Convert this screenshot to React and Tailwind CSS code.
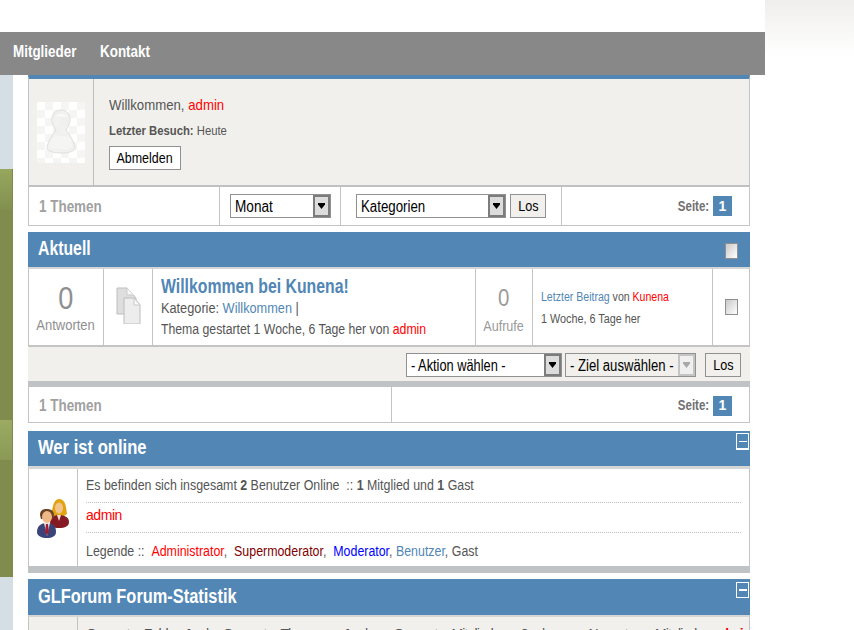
const font = "font-['Liberation_Sans',Arial,sans-serif]";

// the screenshot's text is rendered narrow, so squeeze it sideways
function Narrow({ scale, children }) {
  return <span className={`inline-block origin-left whitespace-nowrap ${scale}`}>{children}</span>;
}

function Arrow({ disabled }) {
  return (
    <span className={`flex h-full w-[17px] shrink-0 items-center justify-center border-2 ${disabled ? "border-[#c4c4c4] bg-[#efefef]" : "border-[#7c7c7c] bg-[#dcdcdc]"}`}>
      <svg width="9" height="6" viewBox="0 0 9 6">
        <path d="M1 0h7v1.5L4.5 6 1 1.5z" fill={disabled ? "#a8a8a8" : "#000"} />
      </svg>
    </span>
  );
}

function Select({ label, width, disabled, scale }) {
  return (
    <div className={`flex h-6 items-center justify-between border border-[#919191] ${disabled ? "bg-[#f1f0ec]" : "bg-white"} ${width}`}>
      <span className="min-w-0 flex-1 overflow-hidden pl-1 pt-px text-[16px] leading-none text-black">
        <Narrow scale={scale}>{label}</Narrow>
      </span>
      <Arrow disabled={disabled} />
    </div>
  );
}

function LosButton() {
  return (
    <button className="flex h-6 w-9 items-center justify-center border border-[#919191] bg-[#f1f0ec] pt-px text-[14px] text-black">
      <span className="inline-block scale-x-[0.9]">Los</span>
    </button>
  );
}

function Checkbox() {
  return <span className="block h-4 w-[13px] border border-[#8f8f8f] bg-gradient-to-br from-[#c9c9c9] to-white" />;
}

function Pager() {
  return (
    <div className="flex items-center gap-1">
      <span className="inline-block origin-right scale-x-[0.82] text-[14px] font-bold text-[#6f6f6f]">Seite:</span>
      <span className="flex h-5 w-[19px] items-center justify-center bg-[#5186b5] text-[14px] font-bold text-white">1</span>
    </div>
  );
}

function SectionHeader({ title, box, height, scale, pad }) {
  return (
    <div className={`flex items-start justify-between bg-[#5186b5] pl-[10px] ${height}`}>
      <h2 className={`text-[20px] font-bold leading-[24px] text-white ${pad}`}>
        <Narrow scale={scale}>{title}</Narrow>
      </h2>
      {box === "check" && (
        <span className="mr-[12px] mt-[11px]"><Checkbox /></span>
      )}
      {box === "thin" && (
        <span className="mr-[1px] mt-[2px] flex h-[17px] w-[13px] items-center justify-center border border-b-2 border-white">
          <span className="h-px w-2 bg-white" />
        </span>
      )}
      {box === "thick" && (
        <span className="mr-[1px] mt-[3px] flex h-4 w-[13px] items-center justify-center border border-white">
          <span className="h-0.5 w-2 bg-white" />
        </span>
      )}
    </div>
  );
}

function Avatar() {
  return (
    <div className="h-[61px] w-12 bg-[repeating-conic-gradient(#f5f5f4_0_25%,#ffffff_0_50%)] bg-[length:16px_16px]">
      <svg width="48" height="61" viewBox="0 0 48 61">
        <path d="M24 8c6 0 9 4 9 10 0 4-2 7-4 10 4 5 8 12 9 17 1 4-6 6-14 6s-15-2-14-6c1-5 5-12 9-17-2-3-4-6-4-10 0-6 3-10 9-10z" fill="#eeeeee" fillOpacity="0.75" stroke="#e0e0e0" />
        <path d="M18 15c2-4 10-4 12 0-3-1-9-1-12 0z" fill="#fafafa" />
        <path d="M15 36c4-3 14-3 18 0l3 9c-5 3-19 3-24 0z" fill="#f6f6f6" fillOpacity="0.7" />
      </svg>
    </div>
  );
}

function DocsIcon() {
  return (
    <svg width="25" height="37" viewBox="0 0 25 37">
      <path d="M1 1h10l9 10v16H1z" fill="#dedede" stroke="#bdbdbd" />
      <path d="M8 11h10l6 7v19H8z" fill="#ededed" stroke="#bdbdbd" />
      <path d="M18 11v7h6z" fill="#fafafa" stroke="#c9c9c9" />
      <path d="M11 1v7h6" fill="#fafafa" stroke="#c9c9c9" />
    </svg>
  );
}

function UsersIcon() {
  return (
    <svg width="33" height="40" viewBox="0 0 33 40">
      <path d="M22 0c4 0 6 3 7 8l1 7-3 2H17l-3-2 2-8c1-4 3-7 6-7z" fill="#e0a411" />
      <ellipse cx="22" cy="9" rx="4" ry="5.5" fill="#f2c38d" />
      <path d="M13 23c0-5 4-7 9-7s10 2 10 7c0 4-4 6-10 6s-9-2-9-6z" fill="#851a24" />
      <path d="M20 16h4l-2 6z" fill="#f4e3d2" />
      <path d="M3 16c0-5 3-6 7-6s7 2 7 6l-1 4H4z" fill="#6a4326" />
      <ellipse cx="10" cy="18" rx="5" ry="6" fill="#efb987" />
      <path d="M0 33c0-6 4-9 10-9s9 3 9 9c0 4-4 6-9 6s-10-2-10-6z" fill="#3b4478" />
      <path d="M7 24h6l-3 13z" fill="#e9e3e3" />
      <path d="M9 25h2l1 8-2 3-2-3z" fill="#a31d32" />
    </svg>
  );
}

export default function App() {
  return (
    <div className={`flex h-[630px] w-[854px] overflow-hidden bg-white text-[14px] text-[#555] ${font}`}>
      <div className="w-[765px] shrink-0">
        <div className="h-8" />
        <nav className="flex h-[43px] items-center gap-[7px] bg-[#888888] pb-1 pl-[13px] text-[17px] font-bold text-white">
          <Narrow scale="scale-x-[0.79]">Mitglieder</Narrow>
          <Narrow scale="scale-x-[0.79]">Kontakt</Narrow>
        </nav>

        <div className="flex">
          {/* left strip of the page template */}
          <div className="w-[13px] shrink-0">
            <div className="h-[94px] bg-[#d5dde5]" />
            <div className="h-[41px] border-r border-[#7d8a4c] bg-gradient-to-b from-[#97a75e] to-[#82904f]" />
            <div className="h-[210px] bg-[#7f8c4e]" />
            <div className="h-[40px] border-r border-[#7d8a4c] bg-gradient-to-b from-[#9bab62] to-[#8a9955]" />
            <div className="h-[117px] bg-[#7f8c4e]" />
            <div className="h-[53px] bg-[#d5dde5]" />
          </div>

          <main className="ml-[15px] w-[722px] shrink-0">
            {/* profile box */}
            <div className="flex h-[112px] border-x border-t-4 border-b-2 border-x-[#bfc3c6] border-t-[#5186b5] border-b-[#c0c0c0] bg-[#f1f0ec]">
              <div className="flex w-[65px] shrink-0 items-center justify-center border-r border-[#bfbfbf] pr-px">
                <Avatar />
              </div>
              <div className="pl-[15px] pt-[17px]">
                <p className="text-[15px] leading-[18px]">
                  <Narrow scale="scale-x-[0.88]">
                    Willkommen, <span className="text-[#ff0000]">admin</span>
                  </Narrow>
                </p>
                <p className="mt-[9px] text-[12px] leading-[16px]">
                  <Narrow scale="scale-x-[0.94]">
                    <span className="font-bold">Letzter Besuch:</span> Heute
                  </Narrow>
                </p>
                <button className="mt-[7px] flex h-6 w-[72px] items-center justify-center border border-[#919191] bg-white pt-px text-[14px] text-black">
                  <span className="inline-block scale-x-[0.89]">Abmelden</span>
                </button>
              </div>
            </div>

            {/* toolbar */}
            <div className="flex h-[39px] border-x border-b border-[#c4c4c4]">
              <div className="flex w-[191px] items-center border-r border-[#c4c4c4] pl-[10px] pt-px text-[16px] font-bold text-[#a0a0a0]">
                <Narrow scale="scale-x-[0.84]">1 Themen</Narrow>
              </div>
              <div className="flex w-[121px] items-center border-r border-[#c4c4c4] pl-[10px]">
                <Select label="Monat" width="w-[101px]" scale="scale-x-[0.85]" />
              </div>
              <div className="flex w-[221px] items-center gap-[4px] border-r border-[#c4c4c4] pl-[15px]">
                <Select label="Kategorien" width="w-[150px]" scale="scale-x-[0.83]" />
                <LosButton />
              </div>
              <div className="flex flex-1 items-center justify-end pr-[17px]">
                <Pager />
              </div>
            </div>

            {/* Aktuell */}
            <div className="mt-[6px]">
              <SectionHeader title="Aktuell" box="check" height="h-[35px]" scale="scale-x-[0.79]" pad="pt-[4px]" />
              <div className="flex h-[80px] border-x border-t-2 border-b-2 border-x-[#c4c4c4] border-t-[#d6d6d6] border-b-[#c4c4c4]">
                <div className="flex w-[75px] shrink-0 flex-col items-center justify-center border-r border-[#c4c4c4] pt-[3px] text-[#8f8f8f]">
                  <span className="scale-x-[0.85] text-[32px] leading-[30px]">0</span>
                  <span className="scale-x-[0.93] pt-[3px] text-[14px] leading-[18px]">Antworten</span>
                </div>
                <div className="flex w-[49px] shrink-0 items-center justify-center border-r border-[#c4c4c4] pb-1">
                  <DocsIcon />
                </div>
                <div className="w-[323px] shrink-0 border-r border-[#c4c4c4] pl-2 pt-[5px]">
                  <p className="text-[20px] font-bold leading-[24px] text-[#5186b5]">
                    <Narrow scale="scale-x-[0.79]">Willkommen bei Kunena!</Narrow>
                  </p>
                  <p className="text-[14px] leading-[20px]">
                    <Narrow scale="scale-x-[0.91]">
                      Kategorie: <span className="text-[#5186b5]">Willkommen</span> |
                    </Narrow>
                  </p>
                  <p className="text-[14px] leading-[22px]">
                    <Narrow scale="scale-x-[0.875]">
                      Thema gestartet 1 Woche, 6 Tage her von <span className="text-[#ff0000]">admin</span>
                    </Narrow>
                  </p>
                </div>
                <div className="flex w-[57px] shrink-0 flex-col items-center justify-center border-r border-[#c4c4c4] pt-[3px] text-[#9a9a9a]">
                  <span className="scale-x-[0.85] text-[24px] leading-[30px]">0</span>
                  <span className="scale-x-[0.9] pt-[4px] text-[14px] leading-[18px]">Aufrufe</span>
                </div>
                <div className="flex w-[180px] shrink-0 flex-col justify-center gap-[5px] border-r border-[#c4c4c4] pl-2 pt-[2px] text-[12px] leading-[17px]">
                  <p>
                    <Narrow scale="scale-x-[0.88]">
                      <span className="text-[#5186b5]">Letzter Beitrag</span> von <span className="text-[#ff0000]">Kunena</span>
                    </Narrow>
                  </p>
                  <p>
                    <Narrow scale="scale-x-[0.9]">1 Woche, 6 Tage her</Narrow>
                  </p>
                </div>
                <div className="flex flex-1 items-center justify-center">
                  <Checkbox />
                </div>
              </div>
              <div className="flex h-[40px] items-start justify-end gap-[3px] border-b-[6px] border-[#bfc3c6] bg-[#f1f0ec] pr-[9px] pt-[6px]">
                <Select label="- Aktion wählen -" width="w-[156px]" scale="scale-x-[0.8]" />
                <Select label="- Ziel auswählen -" width="w-[131px]" scale="scale-x-[0.82]" disabled />
                <span className="ml-[6px]"><LosButton /></span>
              </div>
              <div className="flex h-[36px] border-x border-b border-[#c4c4c4]">
                <div className="flex w-[363px] items-center border-r border-[#c4c4c4] pl-[10px] pt-[2px] text-[16px] font-bold text-[#a0a0a0]">
                  <Narrow scale="scale-x-[0.84]">1 Themen</Narrow>
                </div>
                <div className="flex flex-1 items-center justify-end pr-[17px] pt-[2px]">
                  <Pager />
                </div>
              </div>
            </div>

            {/* Wer ist online */}
            <div className="mt-2">
              <SectionHeader title="Wer ist online" box="thin" height="h-[35px]" scale="scale-x-[0.83]" pad="pt-[4px]" />
              <div className="flex h-[107px] border-x border-t-[3px] border-b-[7px] border-x-[#c4c4c4] border-t-[#d6d6d6] border-b-[#bfc3c6]">
                <div className="flex w-[49px] shrink-0 items-center justify-center border-r border-[#c4c4c4] pl-px pt-[2px]">
                  <UsersIcon />
                </div>
                <div className="flex-1 pl-2 pr-2 text-[14px]">
                  <p className="h-[34px] border-b border-dotted border-[#bdbdbd] pt-[7px] leading-[18px]">
                    <Narrow scale="scale-x-[0.885]">
                      Es befinden sich insgesamt <b>2</b> Benutzer Online &nbsp;:: <b>1</b> Mitglied und <b>1</b> Gast
                    </Narrow>
                  </p>
                  <p className="h-[30px] border-b border-dotted border-[#bdbdbd] pt-[2px] leading-[20px] tracking-[-0.45px] text-[#ff0000]">admin</p>
                  <p className="pt-[9px] leading-[18px]">
                    <Narrow scale="scale-x-[0.885]">
                      Legende :: &nbsp;<span className="text-[#ff0000]">Administrator</span>, &nbsp;<span className="text-[#800000]">Supermoderator</span>, &nbsp;<span className="text-[#0000ff]">Moderator</span>, <span className="text-[#5186b5]">Benutzer</span>, Gast
                    </Narrow>
                  </p>
                </div>
              </div>
            </div>

            {/* GLForum Forum-Statistik */}
            <div className="mt-[6px]">
              <SectionHeader title="GLForum Forum-Statistik" box="thick" height="h-[36px]" scale="scale-x-[0.82]" pad="pt-[5px]" />
              <div className="flex h-[40px] border-x border-t-2 border-x-[#c4c4c4] border-t-[#d6d6d6] bg-[#f1f0ec]">
                <div className="w-[49px] shrink-0 border-r border-[#c4c4c4]" />
                <p className="whitespace-nowrap pl-2 pt-[8px] text-[14px] leading-[18px] tracking-[-0.85px] [word-spacing:11px]">
                  Gesamt Zahl: <b>1</b> | Gesamt Themen: <b>1</b> | <span className="ml-3">Gesamt Mitglieder: <b>2</b> |</span> <span className="ml-[30px]">Neuestes Mitglied: <span className="font-bold text-[#ff0000]">admin</span></span>
                </p>
              </div>
            </div>
          </main>
        </div>
      </div>

      {/* top right corner fade */}
      <div className="h-[56px] w-[89px] bg-gradient-to-b from-[#efeeec] to-white" />
    </div>
  );
}
